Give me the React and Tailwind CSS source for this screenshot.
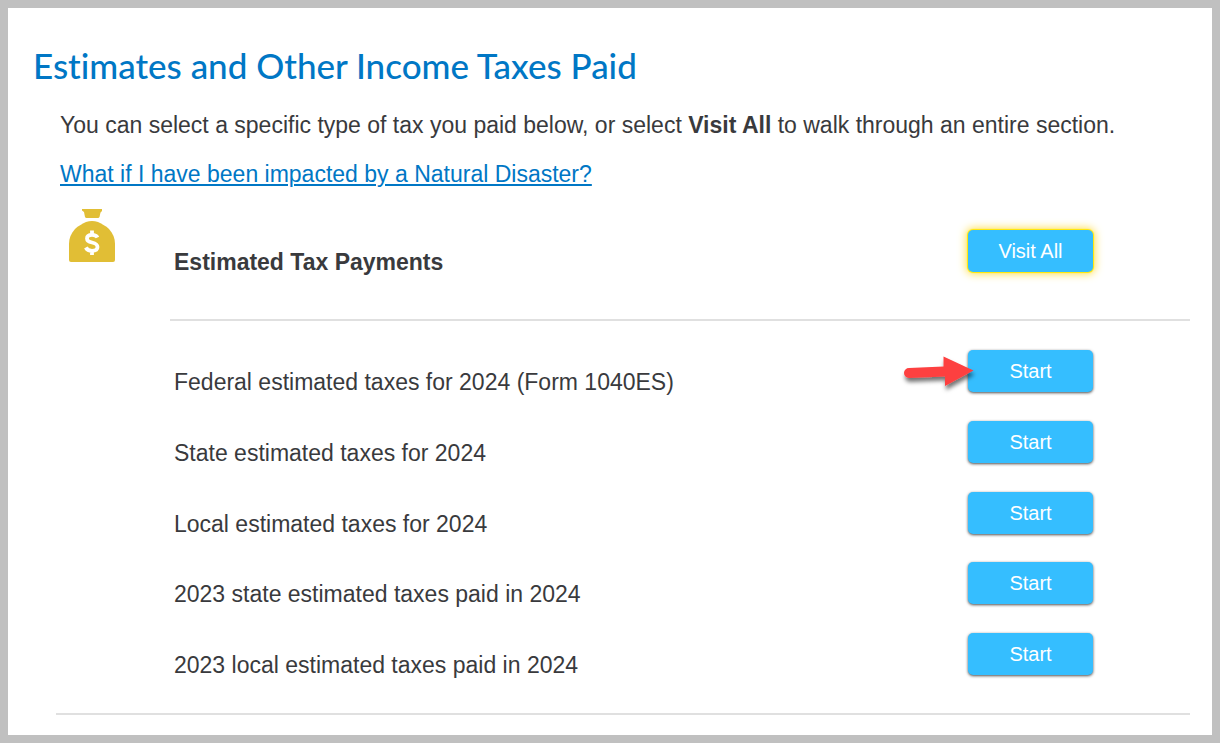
const TAXES = [
  "Federal estimated taxes for 2024 (Form 1040ES)",
  "State estimated taxes for 2024",
  "Local estimated taxes for 2024",
  "2023 state estimated taxes paid in 2024",
  "2023 local estimated taxes paid in 2024",
];

function MoneyBag() {
  return (
    <svg width="46" height="54" viewBox="0 0 46 54" fill="#e1be35" aria-hidden="true">
      <path d="M13 0H33V2L31.500 3.500L30.500 8Q30 9 29 9H17.500Q16.500 9 16 8L15 3L13 1.500Z" />
      <path d="M17 13Q23 11 29 13C32 14.500 37 17 40 20C44 24.500 46 29 46 35V51Q46 53 44 53H2Q0 53 0 51V35C0 29 2 24.500 6 20C9 17 14 14.500 17 13Z" />
      <path
        d="M28.500 28.500C27.500 26.500 25.500 25.800 23 25.800C19.800 25.800 18 27.200 18 29.400C18 31.800 20 32.800 23 33.500C26.500 34.300 28.500 35.500 28.500 38C28.500 40.600 26.300 41.800 23 41.800C20 41.800 18 40.800 16.800 38.500M23 21.500V26M23 41.500V46"
        fill="none"
        stroke="#fff"
        strokeWidth="3.800"
      />
    </svg>
  );
}

function Arrow() {
  return (
    <svg
      className="pointer-events-none absolute top-1 -left-16 overflow-visible"
      width="72"
      height="40"
      viewBox="0 0 72 40"
      fill="#fd4040"
      aria-hidden="true"
    >
      <defs>
        <filter id="arrow-shadow" x="-20%" y="-20%" width="140%" height="160%">
          <feDropShadow dx="1" dy="4" stdDeviation="2" floodColor="#000" floodOpacity="0.55" />
        </filter>
      </defs>
      <path
        filter="url(#arrow-shadow)"
        d="M5 14L39.500 12.500V2.500L69.500 16.500L41 32V22.500L5 24A5 5 0 0 1 5 14Z"
      />
    </svg>
  );
}

function ActionButton({ children, label, highlighted }) {
  const shadow = highlighted
    ? "shadow-[0_0_1px_1px_#ffe800,0_0_8px_2px_#ffdf50]"
    : "shadow-[0_1px_3px_0_rgba(0,0,0,0.7)]";
  return (
    <button
      type="button"
      aria-label={label}
      className={`h-[42px] w-[125px] rounded-[5px] bg-[#35beff] text-xl leading-6 text-white ${shadow}`}
    >
      {children}
    </button>
  );
}

export default function App() {
  return (
    <main className="min-h-screen border-8 border-[#c0c0c0] bg-white pt-[37px] pb-5 font-['Liberation_Sans',Arial,sans-serif] text-[23px] leading-8 text-[#393a3d]">
      <h1 className="pl-[25px] font-['Lato',sans-serif] text-[35px] leading-10 font-medium text-[#0077c5] [font-variant-ligatures:none]">
        Estimates and Other Income Taxes Paid
      </h1>
      <div className="pl-[52px]">
        <p className="mt-6">
          You can select a specific type of tax you paid below, or select <strong>Visit All</strong> to walk
          through an entire section.
        </p>
        <p className="mt-[17px]">
          <a href="#disaster" className="text-[#0077c5] underline decoration-2 underline-offset-2">
            What if I have been impacted by a Natural Disaster?
          </a>
        </p>
      </div>
      <section className="mt-[15px] mr-[22px] ml-12 flex border-b-2 border-[#e0e0e0] pb-[9px]">
        <div className="w-[114px] shrink-0 pt-1 pl-[13px]">
          <MoneyBag />
        </div>
        <div className="grow">
          <header className="flex items-start justify-between border-b-2 border-[#e0e0e0] pt-[25px] pr-[97px] pb-[41px] pl-1">
            <h2 className="pt-4 font-bold">Estimated Tax Payments</h2>
            <ActionButton highlighted>Visit All</ActionButton>
          </header>
          <ul className="grid h-[383px] grid-rows-5 pt-[29px]">
            {TAXES.map((tax, i) => (
              <li key={tax} className="flex items-start justify-between pr-[97px] pl-1">
                <span className="pt-4">{tax}</span>
                <div className="relative flex">
                  <ActionButton label={`Start ${tax}`}>Start</ActionButton>
                  {i === 0 && <Arrow />}
                </div>
              </li>
            ))}
          </ul>
        </div>
      </section>
    </main>
  );
}
